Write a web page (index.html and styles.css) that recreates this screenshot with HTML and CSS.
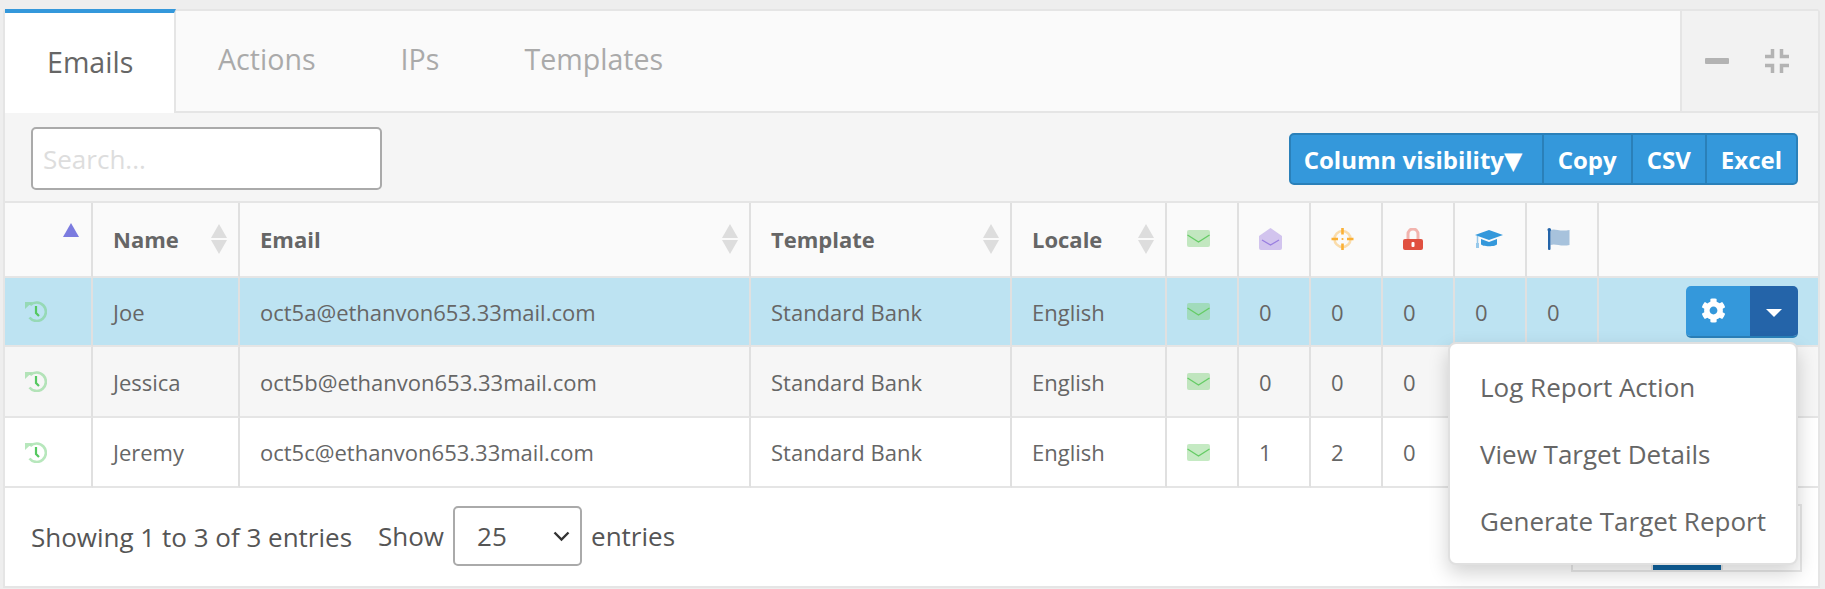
FILE: index.html
```html
<!DOCTYPE html>
<html lang="en">
<head>
    <meta charset="UTF-8">
    <title>Results</title>
    <link rel="stylesheet" href="styles.css">
</head>
<body>

<svg class="sprites" width="0" height="0">
    <symbol id="i-mail" viewBox="0 0 23 17">
        <rect width="23" height="17" rx="2" fill="#7ed07a" opacity=".45"/>
        <path d="M0.5 5 L11.5 12 L22.5 5" fill="none" stroke="#66cc66" stroke-width="1.4"/>
    </symbol>
    <symbol id="i-open" viewBox="0 0 23 22">
        <path d="M11.5 0 L23 8 V20 a2 2 0 0 1 -2 2 H2 a2 2 0 0 1 -2 -2 V8 Z" fill="#a98ee2" opacity=".5"/>
        <path d="M3 12 L11.5 17 L20 12" fill="none" stroke="#9a7fe0" stroke-width="1.4"/>
    </symbol>
    <symbol id="i-target" viewBox="0 0 22 22">
        <circle cx="11" cy="11" r="8" fill="none" stroke="#fbb034" stroke-width="2.6" opacity=".4"/>
        <path d="M11 0 V6.500 M11 15.500 V22 M0 11 H6.500 M15.500 11 H22" stroke="#fbb034" stroke-width="2.6"/>
        <circle cx="11" cy="11" r="1.100" fill="#fbb034"/>
    </symbol>
    <symbol id="i-lock" viewBox="0 0 20 22">
        <path d="M5 11 V6 a5 5 0 0 1 10 0 V11" fill="none" stroke="#e74c3c" stroke-width="3" opacity=".4"/>
        <rect y="11" width="20" height="11" rx="2" fill="#e05040"/>
        <rect x="8.500" y="14" width="3" height="5" rx="1" fill="#fff"/>
    </symbol>
    <symbol id="i-cap" viewBox="0 0 28 18">
        <path d="M6 9 V14 C6 17 22 17 22 14 V9 L14 12 Z" fill="#3498db"/>
        <path d="M14 0 L28 5 L14 10 L0 5 Z" fill="#3498db"/>
        <path d="M2.500 6 V13" stroke="#3498db" stroke-width="1.500" opacity=".5"/>
        <rect x="1" y="13" width="3" height="5" fill="#3498db" opacity=".5"/>
    </symbol>
    <symbol id="i-flag" viewBox="0 0 22 22">
        <path d="M3 2 C8 0 11 4 22 2 V17 C13 19 8 15 3 17 Z" fill="#2a6db0" opacity=".4"/>
        <rect x="0.500" y="1" width="2.500" height="21" rx="1" fill="#2464a9"/>
        <circle cx="1.750" cy="1.800" r="1.800" fill="#2464a9"/>
    </symbol>
    <symbol id="i-history" viewBox="0 0 22 21">
        <path d="M5.200 4.200 A9.200 9.200 0 1 1 4.500 16.500" fill="none" stroke="#6fd07a" stroke-width="2.600" opacity=".5"/>
        <path d="M0 1 L7.500 1 L0 8 Z" fill="#6fd07a" opacity=".5"/>
        <path d="M11 5 V12 L14 15" fill="none" stroke="#55c860" stroke-width="2.200"/>
    </symbol>
    <symbol id="i-gear" viewBox="0 0 512 512">
        <path fill="#fff" d="M487.4 315.7l-42.6-24.6c4.3-23.2 4.3-47 0-70.2l42.6-24.6c4.9-2.8 7.1-8.6 5.5-14-11.1-35.6-30-67.8-54.7-94.6-3.8-4.1-10-5.1-14.8-2.3L380.8 110c-17.9-15.4-38.5-27.3-60.8-35.1V25.800c0-5.600-3.900-10.500-9.400-11.700-36.700-8.200-74.300-7.800-109.200 0-5.500 1.200-9.400 6.100-9.400 11.700V75c-22.200 7.900-42.800 19.800-60.800 35.100L88.700 85.500c-4.900-2.800-11-1.900-14.800 2.300-24.700 26.700-43.600 58.900-54.700 94.600-1.700 5.400.6 11.200 5.500 14L67.300 221c-4.300 23.200-4.300 47 0 70.200l-42.600 24.600c-4.900 2.800-7.100 8.600-5.500 14 11.100 35.600 30 67.800 54.700 94.600 3.800 4.100 10 5.100 14.800 2.300l42.600-24.600c17.900 15.400 38.500 27.300 60.800 35.100v49.200c0 5.600 3.900 10.500 9.400 11.700 36.700 8.200 74.300 7.800 109.200 0 5.500-1.200 9.400-6.100 9.400-11.700v-49.200c22.200-7.900 42.800-19.800 60.800-35.100l42.600 24.600c4.900 2.800 11 1.900 14.800-2.300 24.700-26.700 43.600-58.900 54.700-94.600 1.500-5.500-.7-11.300-5.600-14.100zM256 336c-44.100 0-80-35.900-80-80s35.900-80 80-80 80 35.900 80 80-35.900 80-80 80z"/>
    </symbol>
</svg>

<div class="panel">

    <div class="tabBar">
        <a class="tab tabActive">Emails</a>
        <a class="tab">Actions</a>
        <a class="tab">IPs</a>
        <a class="tab">Templates</a>
        <div class="tabControls">
            <span class="ctlMinus"></span>
            <svg class="ctlCompress" viewBox="0 0 24 24" width="24" height="24">
                <path d="M7.500 0 V7.500 H0 M16.500 0 V7.500 H24 M0 16.500 H7.500 V24 M24 16.500 H16.500 V24" fill="none" stroke="#b3b3b3" stroke-width="3.500"/>
            </svg>
        </div>
    </div>

    <div class="toolbar">
        <input class="search" type="text" placeholder="Search...">
        <div class="btnGroup">
            <button class="tblBtn btnColumns">Column visibility<span class="btnArrow">▼</span></button>
            <button class="tblBtn">Copy</button>
            <button class="tblBtn">CSV</button>
            <button class="tblBtn">Excel</button>
        </div>
    </div>

    <table class="results">
        <thead>
            <tr>
                <th><div class="thInner"><span></span><span class="sortAsc"></span></div></th>
                <th><div class="thInner">Name<span class="sortBoth"></span></div></th>
                <th><div class="thInner">Email<span class="sortBoth"></span></div></th>
                <th><div class="thInner">Template<span class="sortBoth"></span></div></th>
                <th><div class="thInner">Locale<span class="sortBoth"></span></div></th>
                <th><svg class="icMail"><use href="#i-mail"/></svg></th>
                <th><svg class="icTall"><use href="#i-open"/></svg></th>
                <th><svg class="icTall"><use href="#i-target"/></svg></th>
                <th><svg class="icLock"><use href="#i-lock"/></svg></th>
                <th><svg class="icCap"><use href="#i-cap"/></svg></th>
                <th><svg class="icTall"><use href="#i-flag"/></svg></th>
                <th></th>
            </tr>
        </thead>
        <tbody>
            <tr class="selected">
                <td><svg class="icHistory"><use href="#i-history"/></svg></td>
                <td>Joe</td>
                <td>oct5a@ethanvon653.33mail.com</td>
                <td>Standard Bank</td>
                <td>English</td>
                <td><svg class="icMail"><use href="#i-mail"/></svg></td>
                <td>0</td><td>0</td><td>0</td><td>0</td><td>0</td>
                <td class="rowActions">
                    <div class="splitBtn"><span class="splitMain"><svg class="icGear"><use href="#i-gear"/></svg></span><span class="splitCaret"><i></i></span></div>
                </td>
            </tr>
            <tr class="odd">
                <td><svg class="icHistory"><use href="#i-history"/></svg></td>
                <td>Jessica</td>
                <td>oct5b@ethanvon653.33mail.com</td>
                <td>Standard Bank</td>
                <td>English</td>
                <td><svg class="icMail"><use href="#i-mail"/></svg></td>
                <td>0</td><td>0</td><td>0</td><td>0</td><td>0</td>
                <td class="rowActions">
                    <div class="splitBtn"><span class="splitMain"><svg class="icGear"><use href="#i-gear"/></svg></span><span class="splitCaret"><i></i></span></div>
                </td>
            </tr>
            <tr>
                <td><svg class="icHistory"><use href="#i-history"/></svg></td>
                <td>Jeremy</td>
                <td>oct5c@ethanvon653.33mail.com</td>
                <td>Standard Bank</td>
                <td>English</td>
                <td><svg class="icMail"><use href="#i-mail"/></svg></td>
                <td>1</td><td>2</td><td>0</td><td>0</td><td>0</td>
                <td class="rowActions">
                    <div class="splitBtn"><span class="splitMain"><svg class="icGear"><use href="#i-gear"/></svg></span><span class="splitCaret"><i></i></span></div>
                </td>
            </tr>
        </tbody>
    </table>

    <div class="tableFoot">
        <span class="info">Showing 1 to 3 of 3 entries</span>
        <label class="lengthMenu">Show
            <select class="lengthSelect"><option>25</option></select>
            entries
        </label>
        <div class="pager">
            <a class="pageBtn pagePrev"></a>
            <a class="pageBtn pageCurrent"></a>
            <a class="pageBtn pageNext"></a>
        </div>
    </div>

    <ul class="dropMenu">
        <li>Log Report Action</li>
        <li>View Target Details</li>
        <li>Generate Target Report</li>
    </ul>

</div>

</body>
</html>
```

FILE: styles.css
```css
* {
    box-sizing: border-box;
}

html, body {
    margin: 0;
    height: 100%;
    background: #eeeeee;
}

body {
    font-family: "Open Sans", sans-serif;
    font-size: 22px;
    color: #666666;
    padding: 9px 5px 0 3px;
    overflow: hidden;
}

.sprites {
    position: absolute;
}

.panel {
    position: relative;
    background: #ffffff;
    border: 2px solid #e5e5e5;
    border-top: 0;
    border-radius: 4px 4px 0 0;
    height: 579px;
}

/* tabs */
.tabBar {
    display: flex;
    height: 104px;
    background: #fafafa;
    border-bottom: 2px solid #e5e5e5;
    border-top: 2px solid #e5e5e5;
}

.tab {
    display: block;
    font-size: 28.6px;
    color: #aaaaaa;
    padding: 28px 43px 0 42px;
}

.tabActive {
    width: 171px;
    height: 104px;
    margin-top: -2px;
    padding: 29px 0 0 42px;
    background: #ffffff;
    color: #666666;
    border-top: 4px solid #3498db;
    border-right: 2px solid #e5e5e5;
}

.tabControls {
    display: flex;
    align-items: center;
    gap: 36px;
    margin-left: auto;
    width: 138px;
    padding: 0 0 0 23px;
    background: #f2f2f2;
    border-left: 2px solid #e5e5e5;
}

.ctlMinus {
    display: block;
    width: 24px;
    height: 6px;
    border-radius: 1px;
    background: #b3b3b3;
}

/* search + export buttons */
.toolbar {
    display: flex;
    align-items: center;
    justify-content: space-between;
    height: 90px;
    padding: 3px 20px 0 26px;
    background: #f5f5f5;
    border-bottom: 2px solid #e5e5e5;
}

.search {
    width: 351px;
    height: 63px;
    padding: 0 10px;
    font-family: "Open Sans", sans-serif;
    font-size: 26px;
    border: 2px solid #aaaaaa;
    border-radius: 5px;
    background: #ffffff;
}

.search::placeholder {
    color: #dddddd;
}

.btnGroup {
    display: flex;
}

.tblBtn {
    height: 52px;
    padding: 2px 14px 0;
    font-family: "Open Sans", sans-serif;
    font-size: 24px;
    font-weight: 700;
    white-space: nowrap;
    color: #ffffff;
    background: #3498db;
    border: 2px solid #2a80b9;
    border-left: 0;
}

.btnColumns {
    width: 255px;
    padding-left: 13px;
    padding-right: 0;
    text-align: left;
}

.btnArrow {
    font-family: "DejaVu Sans", sans-serif;
    font-weight: 400;
}

.tblBtn:first-child {
    border-left: 2px solid #2a80b9;
    border-radius: 5px 0 0 5px;
}

.tblBtn:last-child {
    border-radius: 0 5px 5px 0;
}

/* table */
.results {
    width: 1813px;
    table-layout: fixed;
    border-collapse: separate;
    border-spacing: 0;
}

.results th, .results td {
    padding: 0 20px;
    border-right: 2px solid #e0e0e0;
    border-bottom: 2px solid #e5e5e5;
    text-align: left;
    vertical-align: middle;
}

.results th:last-child, .results td:last-child {
    border-right: 0;
}

.results th {
    height: 75px;
    padding-bottom: 2px;
    background: #fafafa;
    font-weight: 700;
}

.results th:nth-child(1) { width: 88px; }
.results th:nth-child(2) { width: 147px; }
.results th:nth-child(3) { width: 511px; }
.results th:nth-child(4) { width: 261px; }
.results th:nth-child(5) { width: 155px; }
.results th:nth-child(n+6):nth-child(-n+11) { width: 72px; }

.results tbody tr:nth-child(1) td { height: 69px; }
.results tbody tr:nth-child(2) td { height: 71px; }
.results tbody tr:nth-child(3) td { height: 70px; }

.results .selected td {
    background: #bde3f2;
}

.results .odd td {
    background: #f6f6f6;
}

.thInner {
    display: flex;
    align-items: center;
    justify-content: space-between;
    margin-right: -9px;
}

.results th:first-child .thInner {
    margin-right: -8px;
}

.sortAsc {
    display: block;
    width: 0;
    height: 0;
    margin-top: -18px;
    border-left: 8px solid transparent;
    border-right: 8px solid transparent;
    border-bottom: 14px solid #7b7bdf;
}

.sortBoth {
    display: block;
    position: relative;
    box-sizing: content-box;
    width: 0;
    height: 0;
    margin-top: -16px;
    border-left: 8px solid transparent;
    border-right: 8px solid transparent;
    border-bottom: 14px solid #dddddd;
}

.sortBoth::after {
    content: "";
    position: absolute;
    left: -8px;
    top: 16px;
    border-left: 8px solid transparent;
    border-right: 8px solid transparent;
    border-top: 14px solid #dddddd;
}

.results svg {
    display: block;
}

.icMail { width: 23px; height: 17px; }
.icTall { width: 23px; height: 22px; }
.icLock { width: 20px; height: 22px; }
.icCap { width: 28px; height: 18px; }
.icHistory { width: 22px; height: 21px; }
.icGear { width: 25px; height: 25px; margin-right: 9px; }

.rowActions {
    padding-right: 20px !important;
}

.splitBtn {
    display: flex;
    width: 112px;
    height: 52px;
    margin-left: auto;
    border-radius: 5px;
    overflow: hidden;
    border-bottom: 2px solid #2a80b9;
}

.splitMain {
    display: flex;
    align-items: center;
    justify-content: center;
    width: 64px;
    background: #3498db;
}

.splitCaret {
    display: flex;
    align-items: center;
    justify-content: center;
    width: 48px;
    background: #2464a9;
}

.splitCaret i {
    display: block;
    margin-top: 5px;
    border-left: 8px solid transparent;
    border-right: 8px solid transparent;
    border-top: 8px solid #ffffff;
}

/* footer */
.tableFoot {
    display: flex;
    align-items: center;
    height: 98px;
    padding: 0 16px 2px 26px;
    font-size: 26px;
}

.info {
    margin-right: 26px;
    padding-top: 2px;
    color: #555555;
}

.lengthMenu {
    display: flex;
    align-items: center;
    gap: 9px;
    color: #555555;
}

.lengthSelect {
    appearance: none;
    width: 129px;
    height: 60px;
    padding-left: 22px;
    font-family: "Open Sans", sans-serif;
    font-size: 26px;
    color: #555555;
    background: #ffffff url("data:image/svg+xml,%3Csvg xmlns='http://www.w3.org/2000/svg' width='17' height='11'%3E%3Cpath d='M1.500 1.500 L8.500 8.500 L15.500 1.500' fill='none' stroke='%23333' stroke-width='2.400'/%3E%3C/svg%3E") no-repeat right 10px center;
    border: 2px solid #aaaaaa;
    border-radius: 5px;
}

.pager {
    display: flex;
    align-items: stretch;
    height: 68px;
    margin-top: 4px;
    margin-left: auto;
    border: 2px solid #e8e8e8;
}

.pageBtn {
    display: flex;
    align-items: center;
    justify-content: center;
    color: #888888;
}

.pagePrev { width: 78px; }
.pageNext { width: 79px; border-left: 2px solid #e8e8e8; }

.pageCurrent {
    width: 70px;
    color: #ffffff;
    background: #10639f;
    border-left: 2px solid #e8e8e8;
}

/* row action dropdown, sits over the table */
.dropMenu {
    position: absolute;
    top: 333px;
    right: 20px;
    width: 350px;
    height: 223px;
    margin: 0;
    padding: 9px 0;
    list-style: none;
    background: #ffffff;
    border: 2px solid #e0e0e0;
    border-radius: 8px;
    box-shadow: 0 8px 20px rgba(0, 0, 0, .18);
    font-size: 26px;
}

.dropMenu li {
    display: flex;
    align-items: center;
    height: 67px;
    padding-left: 30px;
}
```
